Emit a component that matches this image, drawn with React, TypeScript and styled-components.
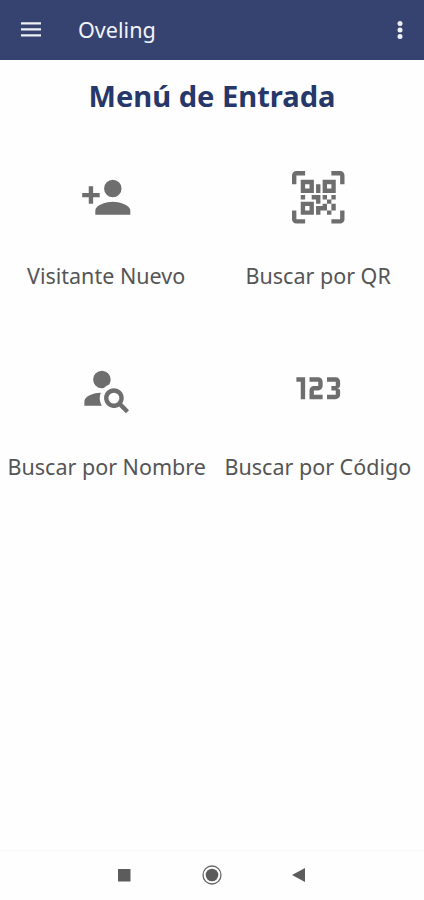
import React from "react";
import styled, { createGlobalStyle } from "styled-components";

const GlobalStyle = createGlobalStyle`
  body { margin: 0; background: #fefefe; font-family: "Noto Sans", sans-serif; }
`;

const Screen = styled.div`
  display: flex;
  flex-direction: column;
  height: 900px;
  overflow: hidden;
`;

const AppBar = styled.header`
  display: flex;
  align-items: center;
  flex: none;
  height: 60px;
  box-sizing: border-box;
  padding: 0 16px 0 21px;
  background: #36426f;
  color: #f1f3fa;
`;

const BarIcon = styled.svg`
  display: block;
  fill: #eef0f8;
`;

const BarTitle = styled.span`
  flex: 1;
  margin-left: 37px;
  padding-bottom: 1px;
  font-size: 21.6px;
  line-height: 30px;
`;

const Heading = styled.h1`
  margin: 0;
  padding-top: 16px;
  height: 94px;
  box-sizing: border-box;
  text-align: center;
  font-size: 29.1px;
  line-height: 40px;
  font-weight: 700;
  color: #26376a;
`;

const Menu = styled.main`
  display: grid;
  grid-template-columns: 212px 212px;
  grid-template-rows: 191px 191px;
  flex: 1;
`;

const Option = styled.button`
  display: flex;
  flex-direction: column;
  align-items: center;
  border: 0;
  padding: 16.5px 0 0;
  background: none;
  font-family: inherit;
  color: #555;
`;

const OptionIcon = styled.svg`
  display: block;
  width: 52.5px;
  height: 52.5px;
  fill: #6e6e6e;
  overflow: visible;
`;

const Label = styled.span<{ $width: number }>`
  width: ${(p) => p.$width}px;
  margin-top: 38px;
  font-size: 21.5px;
  line-height: 30px;
  text-align: left;
  white-space: nowrap;
`;

const NavBar = styled.nav`
  display: flex;
  justify-content: space-between;
  align-items: center;
  flex: none;
  height: 50px;
  box-sizing: border-box;
  padding: 0 118px 2px 117px;
  border-top: 1px solid #f8f8f8;
`;

const NavIcon = styled.svg`
  display: block;
  fill: #5c5c5c;
`;

const options = [
  {
    label: "Visitante Nuevo",
    width: 158,
    icon: "M15 12a4 4 0 1 0 0-8 4 4 0 0 0 0 8zM6 10V7H4v3H1v2h3v3h2v-3h3v-2H6zm9 4c-2.67 0-8 1.34-8 4v2h16v-2c0-2.66-5.33-4-8-4z",
  },
  {
    label: "Buscar por QR",
    width: 145,
    icon: "M4,4H10V10H4V4M20,4V10H14V4H20M14,15H16V13H14V11H16V13H18V11H20V13H18V15H20V18H18V20H16V18H13V20H11V16H14V15M16,15V18H18V15H16M4,20V14H10V20H4M6,6V8H8V6H6M16,6V8H18V6H16M6,16V18H8V16H6M4,11H6V13H4V11M9,11H13V15H11V13H9V11M11,6H13V10H11V6M2,2V6H0V2A2,2 0 0,1 2,0H6V2H2M22,0A2,2 0 0,1 24,2V6H22V2H18V0H22M2,18V22H6V24H2A2,2 0 0,1 0,22V18H2M22,22V18H24V22A2,2 0 0,1 22,24H18V22H22Z",
  },
  {
    label: "Buscar por Nombre",
    width: 197,
    icon: "M15.5,12C18,12 20,14 20,16.5C20,17.38 19.75,18.21 19.31,18.9L22.39,22L21,23.39L17.88,20.32C17.19,20.75 16.37,21 15.5,21C13,21 11,19 11,16.5C11,14 13,12 15.5,12M15.5,14A2.5,2.5 0 0,0 13,16.5A2.5,2.5 0 0,0 15.5,19A2.5,2.5 0 0,0 18,16.5A2.5,2.5 0 0,0 15.5,14M10,4A4,4 0 0,1 14,8C14,8.91 13.69,9.75 13.18,10.43C12.32,10.75 11.55,11.26 10.91,11.9L10,12A4,4 0 0,1 6,8A4,4 0 0,1 10,4M2,20V18C2,15.88 5.31,14.14 9.5,14C9.18,14.78 9,15.62 9,16.5C9,17.79 9.38,19 10,20H2Z",
  },
  {
    label: "Buscar por Código",
    width: 187,
    icon: "M4,17V9H2V7H6V17H4M22,15C22,16.11 21.1,17 20,17H16V15H20V13H18V11H20V9H16V7H20A2,2 0 0,1 22,9V10.5A1.5,1.5 0 0,1 20.5,12A1.5,1.5 0 0,1 22,13.5V15M14,15V17H8V13C8,11.89 8.9,11 10,11H12V9H8V7H12A2,2 0 0,1 14,9V11C14,12.11 13.1,13 12,13H10V15H14Z",
  },
];

export default function App() {
  return (
    <>
      <GlobalStyle />
      <Screen>
        <AppBar>
          <BarIcon width="20" height="16" viewBox="0 0 20 16">
            <path d="M0 .2h20v2.2H0zM0 6.2h20v2.2H0zM0 12.2h20v2.2H0z" />
          </BarIcon>
          <BarTitle>Oveling</BarTitle>
          <BarIcon width="16" height="20" viewBox="0 0 16 20">
            <circle cx="8" cy="3.5" r="2.5" />
            <circle cx="8" cy="10" r="2.5" />
            <circle cx="8" cy="16.5" r="2.5" />
          </BarIcon>
        </AppBar>
        <Heading>Menú de Entrada</Heading>
        <Menu>
          {options.map((o) => (
            <Option key={o.label}>
              <OptionIcon viewBox="0 0 24 24">
                <path d={o.icon} />
              </OptionIcon>
              <Label $width={o.width}>{o.label}</Label>
            </Option>
          ))}
        </Menu>
        <NavBar>
          <NavIcon width="14" height="14" viewBox="0 0 14 14">
            <path d="M1 1h12.5v12.5H1z" />
          </NavIcon>
          <NavIcon width="20" height="20" viewBox="0 0 20 20">
            <circle cx="10" cy="10" r="6.3" />
            <circle cx="10" cy="10" r="9" fill="none" stroke="#666" strokeWidth="1.3" />
          </NavIcon>
          <NavIcon width="14" height="14" viewBox="0 0 14 14">
            <path d="M13 0v14L0 7z" />
          </NavIcon>
        </NavBar>
      </Screen>
    </>
  );
}
